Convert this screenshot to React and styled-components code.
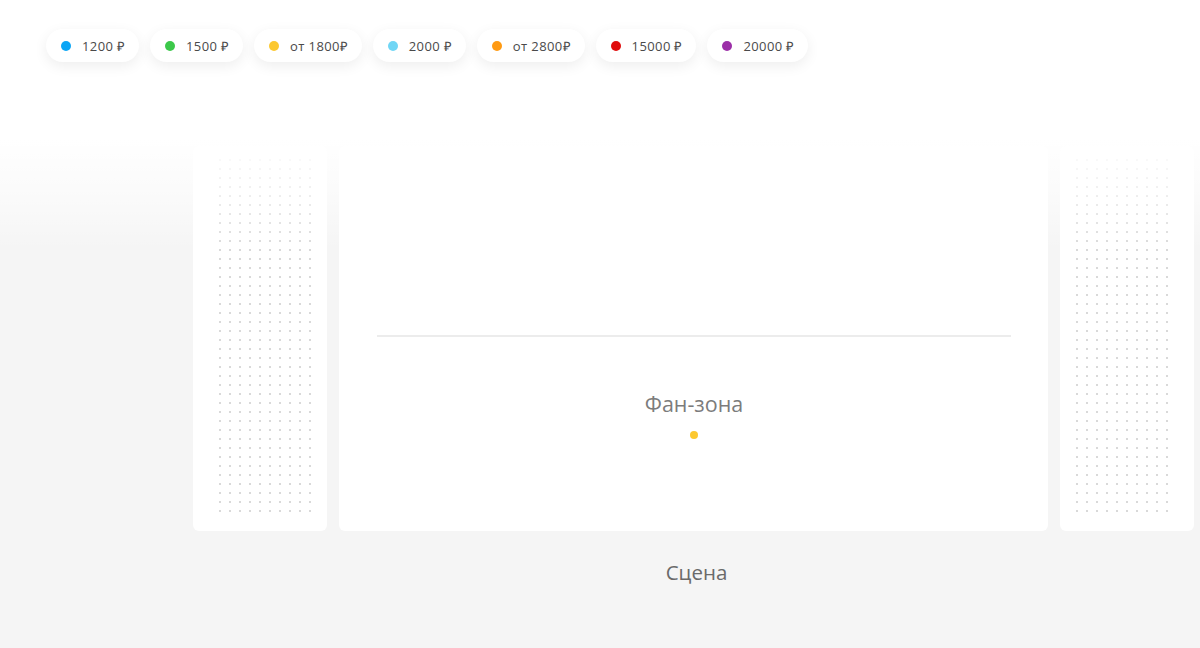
import React from "react";
import styled, { createGlobalStyle } from "styled-components";

const GlobalStyle = createGlobalStyle`
  html, body {
    margin: 0;
    padding: 0;
    background: #f5f5f5;
    font-family: "Open Sans", "Liberation Sans", sans-serif;
  }
`;

const Page = styled.div`
  position: relative;
  width: 1200px;
  height: 648px;
  overflow: hidden;
  background: #f5f5f5;
`;

const Fade = styled.div`
  position: absolute;
  left: 0;
  right: 0;
  top: 0;
  height: 250px;
  background: linear-gradient(
    to bottom,
    #ffffff 0,
    #ffffff 140px,
    rgba(255, 255, 255, 0.6) 190px,
    rgba(255, 255, 255, 0) 250px
  );
  pointer-events: none;
  z-index: 1;
`;

const Legend = styled.div`
  position: relative;
  z-index: 2;
  display: flex;
  gap: 11px;
  padding: 29px 0 0 46px;
`;

const Pill = styled.div`
  display: flex;
  align-items: center;
  gap: 11px;
  height: 33px;
  padding: 0 13.5px 0 15px;
  border-radius: 17px;
  background: #fff;
  box-shadow: 0 4px 14px rgba(0, 0, 0, 0.07);
  font-size: 13px;
  letter-spacing: 0.4px;
  color: #4a4a4a;
  white-space: nowrap;
`;

const Dot = styled.span`
  width: 10px;
  height: 10px;
  border-radius: 50%;
  background: ${(p) => p.$color};
`;

const Map = styled.div`
  display: grid;
  grid-template-columns: 134px 709px 134px;
  column-gap: 12px;
  margin: 84px 0 0 193px;
`;

const Side = styled.div`
  height: 385px;
  box-sizing: border-box;
  background: #fff;
  border-radius: 6px;
  display: flex;
  justify-content: ${(p) => (p.$left ? "flex-end" : "flex-start")};
  padding: 10px 12px 0;
`;

const Seats = styled.div`
  display: grid;
  grid-template-columns: repeat(10, 10px);
  grid-auto-rows: 9px;
  align-content: start;
`;

const Seat = styled.span`
  width: 2px;
  height: 2px;
  margin: 3px 4px;
  border-radius: 50%;
  background: #cccccc;
`;

const Hall = styled.div`
  height: 385px;
  background: #fff;
  border-radius: 6px;
  display: flex;
  flex-direction: column;
  align-items: center;
  padding: 0 37px 0 38px;
`;

const Line = styled.div`
  align-self: stretch;
  height: 2px;
  margin-top: 189px;
  background: #ececec;
`;

const FanLabel = styled.div`
  margin-top: 52px;
  font-size: 21.5px;
  line-height: 30px;
  color: #7c7c7c;
`;

const FanDot = styled.span`
  width: 8px;
  height: 8px;
  margin-top: 12px;
  border-radius: 50%;
  background: #fcc830;
`;

const Stage = styled.div`
  grid-column: 2;
  text-align: center;
  padding-left: 6px;
  margin-top: 26px;
  font-size: 20.5px;
  line-height: 30px;
  color: #6a6a6a;
`;

const prices = [
  { color: "#0aa5f5", label: "1200 ₽" },
  { color: "#3cc84a", label: "1500 ₽" },
  { color: "#fcc830", label: "от 1800₽" },
  { color: "#70d6f5", label: "2000 ₽" },
  { color: "#ff9a12", label: "от 2800₽" },
  { color: "#e00c0c", label: "15000 ₽" },
  { color: "#9c2fa8", label: "20000 ₽" },
];

const seats = Array.from({ length: 400 }, (_, i) => i);

function SideBlock({ left }) {
  return (
    <Side $left={left}>
      <Seats>
        {seats.map((i) => (
          <Seat key={i} />
        ))}
      </Seats>
    </Side>
  );
}

export default function App() {
  return (
    <Page>
      <GlobalStyle />
      <Fade />
      <Legend>
        {prices.map((p) => (
          <Pill key={p.label}>
            <Dot $color={p.color} />
            {p.label}
          </Pill>
        ))}
      </Legend>
      <Map>
        <SideBlock left />
        <Hall>
          <Line />
          <FanLabel>Фан-зона</FanLabel>
          <FanDot />
        </Hall>
        <SideBlock />
        <Stage>Сцена</Stage>
      </Map>
    </Page>
  );
}
